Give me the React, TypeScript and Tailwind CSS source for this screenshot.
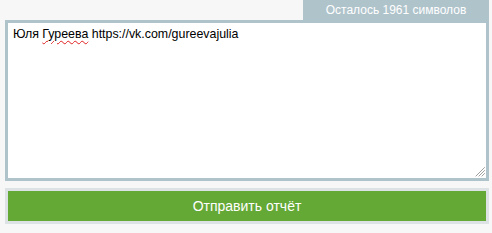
export default function App() {
  return (
    <div
      className="w-[492px] h-[233px] bg-[#f7f7f7] px-[5px] pr-[3px] flex flex-col"
      style={{ fontFamily: '"Liberation Sans", Arial, sans-serif' }}
    >
      <div className="flex justify-end">
        <div className="w-[186px] h-[20px] bg-[#afc3cb] text-white text-[12px] leading-[20px] text-center">
          Осталось 1961 символов
        </div>
      </div>
      <div className="relative h-[161px] border-[3px] border-[#afc3cb] bg-white pl-[5px] pt-[4px] text-[12.4px] leading-[15px] text-black">
        <span>Юля </span>
        <span className="underline decoration-wavy decoration-[#e02020] decoration-1 underline-offset-2">Гуреева</span>
        <span> https://vk.com/gureevajulia</span>
        <svg className="absolute right-[1px] bottom-[1px]" width="10" height="10" viewBox="0 0 10 10">
          <path d="M9.5 0.5 L0.5 9.5 M9.5 3.5 L3.5 9.5 M9.5 6.5 L6.5 9.5" stroke="#666" strokeWidth="1" strokeDasharray="1 0.4" />
        </svg>
      </div>
      <div className="mt-[7px] h-[36px] border-[3px] border-[#dde2e5] bg-[#64a836] flex items-center justify-center text-white text-[14px]">
        Отправить отчёт
      </div>
    </div>
  );
}
